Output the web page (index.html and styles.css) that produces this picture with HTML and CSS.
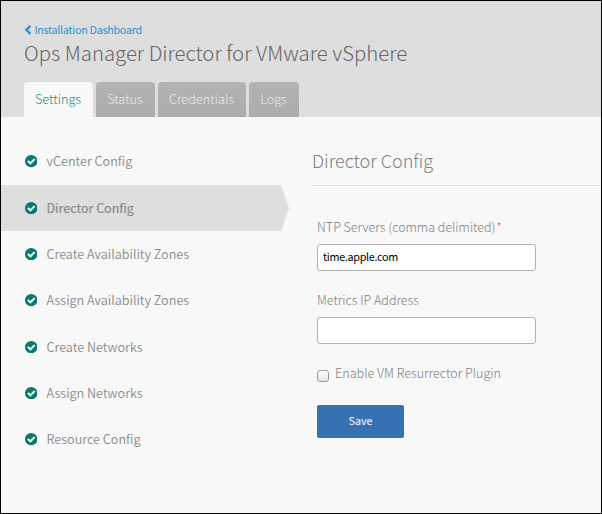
FILE: index.html
```html
<!DOCTYPE html>
<html lang="en">
<head>
<meta charset="utf-8">
<title>Ops Manager Director for VMware vSphere</title>
<link rel="stylesheet" href="styles.css">
</head>
<body>
<svg class="defs" width="0" height="0" aria-hidden="true">
  <symbol id="check" viewBox="0 0 12 12">
    <circle cx="6" cy="6" r="6" fill="#087b6c"/>
    <path d="M2.8 5.7 L5.2 8.1 L9.3 4" fill="none" stroke="#fff" stroke-width="2"/>
  </symbol>
</svg>
<div class="window">
  <header class="header">
    <a class="back"><svg width="8" height="10" viewBox="0 0 8 10"><path d="M6.4 0.8 L2.4 4.8 L6.4 8.8" fill="none" stroke="#2f93cf" stroke-width="2.5"/></svg><span>Installation Dashboard</span></a>
    <h1 class="title"><span>Ops Manager Director for VMware vSphere</span></h1>
    <nav class="tabs">
      <a class="tab tab-settings active"><span>Settings</span></a>
      <a class="tab tab-status"><span>Status</span></a>
      <a class="tab tab-credentials"><span>Credentials</span></a>
      <a class="tab tab-logs"><span>Logs</span></a>
    </nav>
  </header>
  <div class="content">
    <ul class="menu">
      <li><svg class="check"><use href="#check"/></svg><span>vCenter Config</span></li>
      <li class="selected"><svg class="check"><use href="#check"/></svg><span>Director Config</span></li>
      <li><svg class="check"><use href="#check"/></svg><span>Create Availability Zones</span></li>
      <li><svg class="check"><use href="#check"/></svg><span>Assign Availability Zones</span></li>
      <li><svg class="check"><use href="#check"/></svg><span>Create Networks</span></li>
      <li><svg class="check"><use href="#check"/></svg><span>Assign Networks</span></li>
      <li><svg class="check"><use href="#check"/></svg><span>Resource Config</span></li>
    </ul>
    <main class="panel">
      <h2 class="heading"><span>Director Config</span></h2>
      <form class="form">
        <label class="label" for="ntp"><span>NTP Servers (comma delimited)</span><span class="required">*</span></label>
        <input class="field" id="ntp" type="text" value="time.apple.com">
        <label class="label label-metrics" for="metrics"><span>Metrics IP Address</span></label>
        <input class="field" id="metrics" type="text">
        <label class="toggle"><input class="checkbox" type="checkbox"><span>Enable VM Resurrector Plugin</span></label>
        <button class="save" type="button">Save</button>
      </form>
    </main>
  </div>
</div>
</body>
</html>
```
FILE: styles.css
```css
* { box-sizing: border-box; }
body {
  margin: 0;
  font-family: "Noto Sans CJK SC", "Open Sans", sans-serif;
  font-weight: 300;
  color: #808080;
}
.defs { display: block; height: 0; }
.window {
  width: 602px;
  height: 514px;
  border: 1px solid #000;
  background: #f8f8f8;
  overflow: hidden;
}
.header {
  height: 116px;
  padding: 21px 0 0 23px;
  background: #dedede;
}
.back {
  display: flex;
  align-items: center;
  gap: 2.4px;
  height: 16px;
  font-size: 10.8px;
  font-weight: 400;
  letter-spacing: -0.3px;
  line-height: 14px;
  color: #2f93cf;
}
.back span { padding-bottom: 2px; }
.title {
  margin: 0;
  height: 44px;
  font-size: 20.35px;
  font-weight: 300;
  line-height: 28px;
  color: #666;
  white-space: nowrap;
}
.tabs { display: flex; gap: 3px; }
.tab {
  height: 35px;
  border-radius: 4px 4px 0 0;
  background: linear-gradient(#b3b3b3, #acacac);
  color: #e9e9e9;
  font-size: 12.7px;
  line-height: 33px;
  text-align: center;
}
.tab span { margin-right: 1px; }
.tab.active { background: #f8f8f8; color: #268f7c; }
.tab-settings { width: 69px; }
.tab-status { width: 59px; }
.tab-credentials { width: 88px; }
.tab-logs { width: 50px; }
.content { display: flex; }
.menu {
  width: 288px;
  margin: 0;
  padding: 21.7px 0 0;
  list-style: none;
}
.menu li {
  display: flex;
  align-items: center;
  gap: 9.4px;
  height: 46.3px;
  padding: 0 0 2px 23.7px;
  color: #8b8b8b;
  font-size: 12.65px;
  font-weight: 350;
  white-space: nowrap;
}
.menu .selected {
  background: #dedede;
  clip-path: polygon(0 0, 280px 0, 288px 50%, 280px 100%, 0 100%);
  font-size: 12.5px;
  font-weight: 400;
  -webkit-text-stroke: 0.2px #8b8b8b;
}
.check { width: 12.4px; height: 12.4px; margin-top: 1.4px; }
.panel { flex: 1; padding-left: 23px; }
.heading {
  margin: 0;
  height: 69px;
  padding-top: 29px;
  border-bottom: 1px solid #e2e2e2;
  font-size: 18px;
  font-weight: 300;
  line-height: 28px;
}
.form {
  display: flex;
  flex-direction: column;
  align-items: flex-start;
  padding: 31px 0 0 5px;
}
.label {
  height: 27px;
  font-size: 12.5px;
  line-height: 20px;
}
.label-metrics { margin-top: 19px; }
.required { margin-left: 1px; color: #ff5a50; }
.field {
  width: 219px;
  height: 27px;
  padding: 0 5px 3px;
  border: 1px solid #b2b2b2;
  border-radius: 3px;
  background: #fff;
  color: #000;
  font-family: inherit;
  font-size: 10.8px;
  font-weight: 400;
  letter-spacing: -0.3px;
  outline: 0;
}
.toggle {
  display: flex;
  gap: 6px;
  height: 42px;
  margin-top: 19px;
  font-size: 12.6px;
  line-height: 20px;
}
.checkbox {
  appearance: none;
  width: 12px;
  height: 12px;
  margin: 7px 0 0;
  border: 1px solid #999;
  border-radius: 3px;
  background: linear-gradient(#fff, #e6e6e6);
}
.save {
  width: 87px;
  height: 33px;
  padding: 0 0 3px;
  border: 0;
  border-radius: 2px;
  background: #3671b1;
  color: #fff;
  font-family: inherit;
  font-size: 10.8px;
}
```
